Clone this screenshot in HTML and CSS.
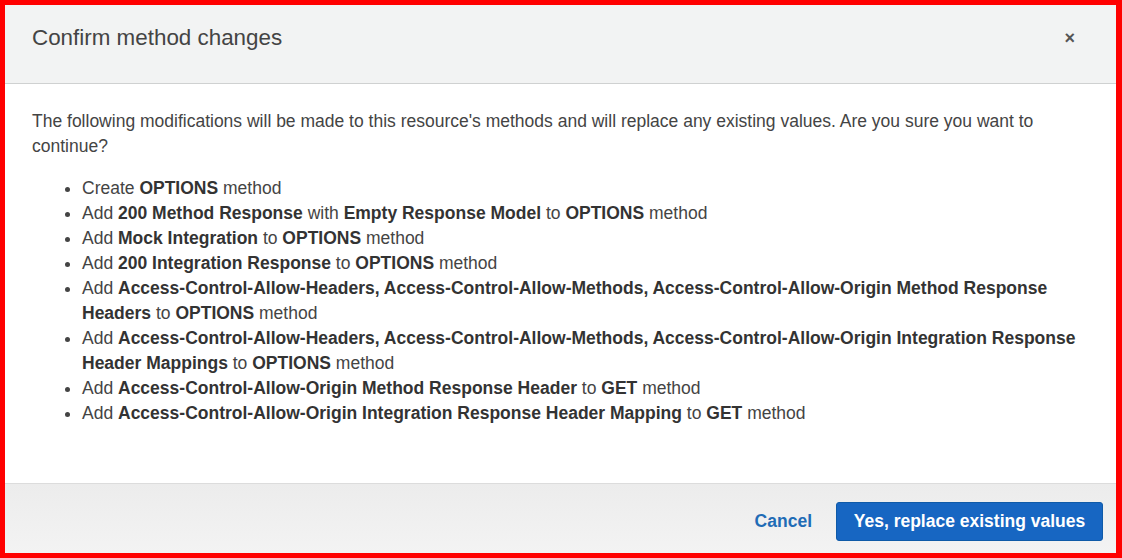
FILE: index.html
```html
<!DOCTYPE html>
<html lang="en">
<head>
    <meta charset="UTF-8">
    <meta name="viewport" content="width=device-width, initial-scale=1.0">
    <title>Confirm method changes</title>
    <link rel="stylesheet" href="styles.css">
</head>
<body>
    <div class="dialog">
        <div class="dialog-header">
            <h2 class="dialog-title">Confirm method changes</h2>
            <button type="button" class="close">&times;</button>
        </div>
        <div class="dialog-body">
            <p>The following modifications will be made to this resource's methods and will replace any existing values. Are you sure you want to continue?</p>
            <ul class="changes">
                <li>Create <b>OPTIONS</b> method</li>
                <li>Add <b>200 Method Response</b> with <b>Empty Response Model</b> to <b>OPTIONS</b> method</li>
                <li>Add <b>Mock Integration</b> to <b>OPTIONS</b> method</li>
                <li>Add <b>200 Integration Response</b> to <b>OPTIONS</b> method</li>
                <li>Add <b>Access-Control-Allow-Headers, Access-Control-Allow-Methods, Access-Control-Allow-Origin Method Response Headers</b> to <b>OPTIONS</b> method</li>
                <li>Add <b>Access-Control-Allow-Headers, Access-Control-Allow-Methods, Access-Control-Allow-Origin Integration Response Header Mappings</b> to <b>OPTIONS</b> method</li>
                <li>Add <b>Access-Control-Allow-Origin Method Response Header</b> to <b>GET</b> method</li>
                <li>Add <b>Access-Control-Allow-Origin Integration Response Header Mapping</b> to <b>GET</b> method</li>
            </ul>
        </div>
        <div class="dialog-footer">
            <button type="button" class="btn-link">Cancel</button>
            <button type="button" class="btn-primary">Yes, replace existing values</button>
        </div>
    </div>
</body>
</html>
```

FILE: styles.css
```css
/* Estilos del dialogo */
body {
    margin: 0;
    padding: 5px 6px 5px 5px;
    background-color: #ff0000;
    font-family: "Liberation Sans", Arial, sans-serif;
    color: #444;
    height: 558px;
    box-sizing: border-box;
}
.dialog {
    height: 548px;
    background-color: #fff;
    display: flex;
    flex-direction: column;
}
.dialog-header {
    height: 79px;
    box-sizing: border-box;
    padding: 0 41px 12px 27px;
    background-color: #f2f3f3;
    border-bottom: 1px solid #cfd1d1;
    display: flex;
    align-items: center;
    justify-content: space-between;
}
.dialog-title {
    margin: 0;
    font-size: 22.4px;
    font-weight: normal;
    color: #444;
}
.close {
    border: none;
    background: none;
    padding: 0;
    font-family: "Liberation Sans", Arial, sans-serif;
    font-size: 18px;
    font-weight: bold;
    color: #555;
    cursor: pointer;
}
.dialog-body {
    flex: 1;
    padding: 25px 27px 0 27px;
    font-size: 17.5px;
    line-height: 25px;
}
.dialog-body p {
    margin: 0 0 17px 0;
}
.changes {
    margin: 0;
    padding-left: 50px;
}
.changes b {
    color: #333;
}
.dialog-footer {
    height: 70px;
    box-sizing: border-box;
    border-top: 1px solid #dcdcdc;
    background: linear-gradient(#ececec, #f3f3f3);
    display: flex;
    justify-content: flex-end;
    align-items: center;
    gap: 12px;
    padding: 6px 13px 0 0;
}
.btn-link {
    border: none;
    background: none;
    padding: 8px 12px;
    font-family: "Liberation Sans", Arial, sans-serif;
    font-size: 17.5px;
    font-weight: bold;
    color: #1f6cb6;
    cursor: pointer;
}
.btn-primary {
    width: 267px;
    height: 39px;
    border: 1px solid #0f5aa8;
    border-radius: 3px;
    background-color: #1766c2;
    color: #fff;
    font-family: "Liberation Sans", Arial, sans-serif;
    font-size: 17.5px;
    font-weight: bold;
    cursor: pointer;
}
```
